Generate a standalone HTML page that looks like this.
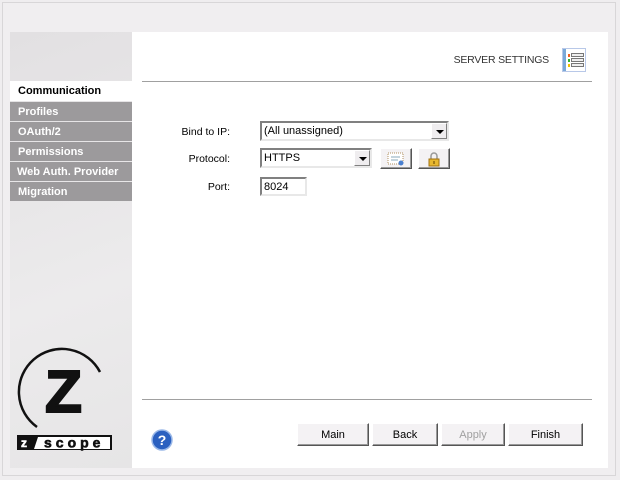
<!DOCTYPE html>
<html><head><style>
*{margin:0;padding:0;box-sizing:border-box}
body{width:620px;height:480px;background:#efedef;font-family:"Liberation Sans",sans-serif;font-size:11px;position:relative;overflow:hidden}
.frame{position:absolute;left:2px;top:2px;width:614px;height:474px;border:1px solid #d8d6d8;background:#f0eef0}
.side{position:absolute;left:10px;top:32px;width:122px;height:436px;background:linear-gradient(160deg,#e2e0e2,#ecebec 60%,#e6e5e6)}
.main{position:absolute;left:132px;top:32px;width:476px;height:436px;background:#fff}
.hr{position:absolute;height:1px;background:#a0a0a0}
.menu div{position:absolute;left:10px;width:122px;height:19px;background:#9c9a9c;color:#fff;font-weight:bold;font-size:11px;line-height:21px;padding-left:8px}
.menu div.sel{background:#fff;color:#000;height:20px}
.lbl{position:absolute;text-align:right;width:80px;left:150px;font-size:10.5px}
.inp{position:absolute;background:#fff;border:2px solid;border-color:#808080 #e8e8e8 #e8e8e8 #808080;padding-left:2px;line-height:17px;font-size:11px}
.dd{position:absolute;right:0;top:0;width:16px;height:16px;background:#efedef;border:1px solid;border-color:#fff #808080 #808080 #fff}
.dd:after{content:"";position:absolute;left:4px;top:6px;border:4px solid transparent;border-top:4px solid #000;border-bottom:0}
.btn{position:absolute;background:#f4f2f4;border:1px solid;border-color:#fff #555 #555 #fff;box-shadow:inset -1px -1px #999;text-align:center;line-height:22px;font-size:11px}
</style></head><body>
<div class="frame"></div>
<div class="side"></div>
<div class="main"></div>
<div class="hr" style="left:142px;top:81px;width:450px"></div>
<div class="hr" style="left:142px;top:399px;width:450px"></div>
<div style="position:absolute;right:71px;top:54px;color:#333;font-size:10.5px;letter-spacing:-0.2px">SERVER SETTINGS</div>
<svg style="position:absolute;left:562px;top:48px" width="24" height="24">
<rect x="0.5" y="0.5" width="23" height="23" fill="#fff" stroke="#b8c8e8"/>
<rect x="1" y="1" width="3" height="22" fill="#7aa8d8"/>
<rect x="6" y="6" width="2" height="3" fill="#f06020"/><rect x="6" y="11" width="2" height="3" fill="#30b030"/><rect x="6" y="16" width="2" height="3" fill="#f0c000"/>
<rect x="9.5" y="5.5" width="12" height="3" fill="#eee" stroke="#777"/><rect x="9.5" y="10.5" width="12" height="3" fill="#eee" stroke="#777"/><rect x="9.5" y="15.5" width="12" height="3" fill="#eee" stroke="#777"/>
</svg>
<div class="menu">
<div class="sel" style="top:81px">Communication</div>
<div style="top:102px">Profiles</div>
<div style="top:122px">OAuth/2</div>
<div style="top:142px">Permissions</div>
<div style="top:162px;padding-left:7px">Web Auth. Provider</div>
<div style="top:182px">Migration</div>
</div>
<div class="lbl" style="top:126px">Bind to IP:</div>
<div class="lbl" style="top:153px">Protocol:</div>
<div class="lbl" style="top:181px">Port:</div>
<div class="inp" style="left:260px;top:121px;width:189px;height:20px">(All unassigned)<div class="dd"></div></div>
<div class="inp" style="left:260px;top:148px;width:112px;height:20px">HTTPS<div class="dd"></div></div>
<div class="btn" style="left:380px;top:148px;width:32px;height:21px;line-height:normal"><svg width="20" height="16" style="margin-top:2px"><rect x="2" y="2" width="15" height="11" fill="#fff" stroke="#b09060" stroke-dasharray="1 1"/><line x1="5" y1="6" x2="14" y2="6" stroke="#8ab"/><line x1="5" y1="9" x2="12" y2="9" stroke="#8ab"/><circle cx="15" cy="12" r="2.5" fill="#4a80d0"/></svg></div>
<div class="btn" style="left:418px;top:148px;width:32px;height:21px;line-height:normal"><svg width="16" height="16" style="margin-top:2px"><path d="M5 8V5a3 3 0 0 1 6 0v3" fill="none" stroke="#999" stroke-width="1.5"/><rect x="3" y="8" width="10" height="7" fill="#e8b830" stroke="#a07010"/><rect x="7.5" y="10" width="1" height="3" fill="#604000"/></svg></div>
<div class="inp" style="left:260px;top:177px;width:47px;height:19px">8024</div>
<svg style="position:absolute;left:0;top:340px" width="132" height="128">
<path d="M37 87 A43 43 0 1 1 100 32" fill="none" stroke="#111" stroke-width="2.5"/>
<text x="45" y="72" font-family="Liberation Sans" font-weight="bold" font-size="59" fill="#111" stroke="#111" stroke-width="2" textLength="37" lengthAdjust="spacingAndGlyphs">Z</text>
<rect x="17" y="95" width="95" height="15" fill="#111"/>
<text x="21" y="107" font-family="Liberation Sans" font-weight="bold" font-size="12" fill="#fff" stroke="#fff" stroke-width="0.6">z</text>
<polygon points="34,109 38,97 110,97 110,109" fill="#fff"/>
<text x="44" y="107.5" font-family="Liberation Sans" font-weight="bold" font-size="14" fill="#111" stroke="#111" stroke-width="0.6" letter-spacing="4">scope</text>
</svg>
<svg style="position:absolute;left:151px;top:429px" width="22" height="22"><circle cx="11" cy="11" r="10" fill="#2a60c0" stroke="#9ab8e8" stroke-width="1.5"/><text x="11" y="16" text-anchor="middle" font-family="Liberation Sans" font-weight="bold" font-size="14" fill="#fff">?</text></svg>
<div class="btn" style="left:297px;top:423px;width:72px;height:23px">Main</div>
<div class="btn" style="left:372px;top:423px;width:66px;height:23px">Back</div>
<div class="btn" style="left:441px;top:423px;width:64px;height:23px;color:#a0a0a0">Apply</div>
<div class="btn" style="left:508px;top:423px;width:75px;height:23px">Finish</div>
</body></html>
